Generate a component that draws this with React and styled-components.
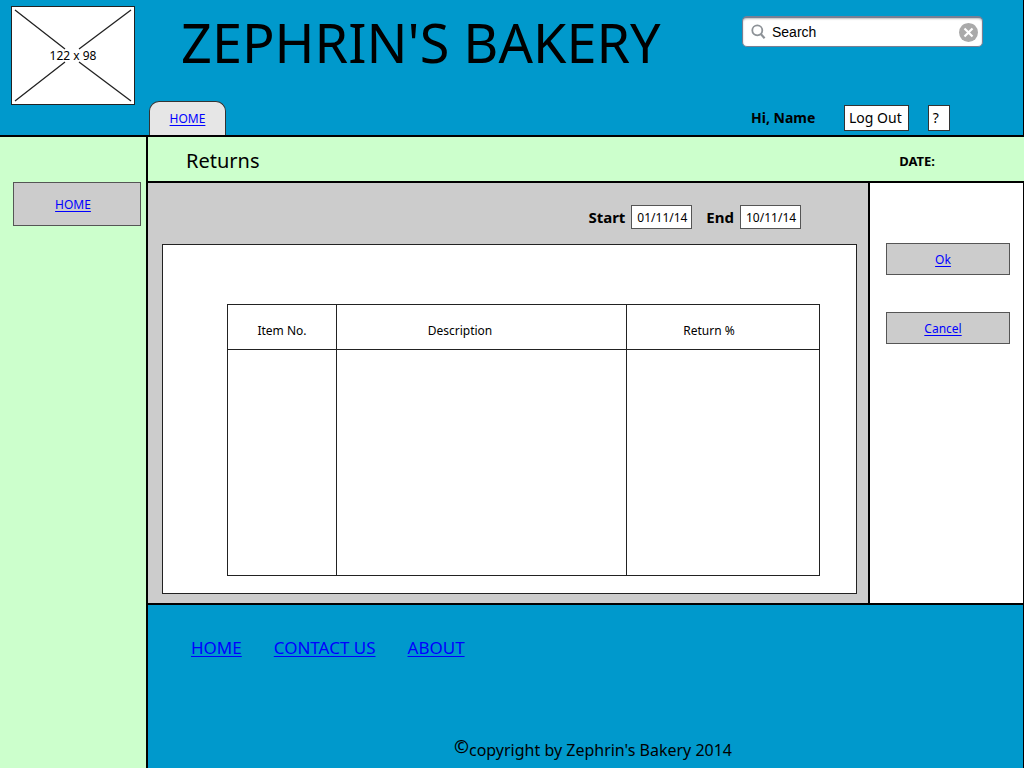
import React from "react";
import styled, { createGlobalStyle } from "styled-components";

const color = {
  blue: "#0099cc",
  green: "#ccffcc",
  grey: "#cccccc",
  line: "#000000",
  soft: "#555555",
  link: "#0000ff",
};

const GlobalStyle = createGlobalStyle`
  *, *::before, *::after { box-sizing: border-box; }
  body {
    margin: 0;
    color: #000;
    font-family: "Noto Sans", sans-serif;
    font-size: 12px;
    line-height: 16px;
  }
  h1, h2, p { margin: 0; font-weight: 400; }
`;

const Page = styled.div`
  display: flex;
  flex-direction: column;
  min-height: 100vh;
`;

const Header = styled.header`
  display: grid;
  grid-template-columns: 149px 1fr auto;
  min-height: 137px;
  background: ${color.blue};
  border-bottom: 2px solid ${color.line};
  border-right: 1px solid ${color.line};
`;

const Logo = styled.div`
  display: grid;
  place-items: center;
  width: 124px;
  height: 99px;
  margin: 6px 0 0 11px;
  background: #fff;
  border: 1px solid #222;

  > * { grid-area: 1 / 1; }
`;

const Brand = styled.div`
  display: flex;
  flex-direction: column;
  justify-content: space-between;
  align-items: flex-start;
`;

const SiteTitle = styled.h1`
  padding: 10px 0 0 32px;
  font-size: 54px;
  line-height: 64px;
  white-space: nowrap;
`;

const Link = styled.a`
  color: ${color.link};
  font-size: ${(p) => (p.$large ? 17 : 12)}px;
  line-height: ${(p) => (p.$large ? 24 : 16)}px;
  text-decoration: underline;
  text-underline-offset: 2px;
`;

const Tab = styled.nav`
  width: 77px;
  height: 34px;
  padding-top: 9px;
  text-align: center;
  background: #e6e6e6;
  border: 1px solid #333;
  border-bottom: 0;
  border-radius: 10px 10px 0 0;
`;

const Tools = styled.div`
  display: flex;
  flex-direction: column;
  justify-content: space-between;
  width: 241px;
  margin-right: 40px;
  padding: 16px 0 4px;
`;

const SearchBox = styled.form`
  display: flex;
  align-items: center;
  height: 31px;
  padding: 0 4px 0 8px;
  background: #fff;
  border: 1px solid #777f94;
  border-top-width: 2px;
  border-radius: 5px;
  box-shadow: inset 0 1px 2px #bbb;
`;

const SearchInput = styled.input`
  flex: 1;
  min-width: 0;
  padding: 0 0 0 6px;
  border: 0;
  outline: 0;
  background: transparent;
  color: #000;
  font: 14px/20px "Liberation Sans", sans-serif;
`;

const ClearButton = styled.button`
  display: flex;
  padding: 0;
  border: 0;
  background: none;
`;

const UserRow = styled.div`
  display: flex;
  align-items: center;
  padding-left: 9px;
`;

const Greeting = styled.p`
  flex: 0 0 93px;
  font-size: 14px;
  font-weight: 700;
`;

const SmallButton = styled.button`
  height: 26px;
  margin-right: 19px;
  padding: 0 ${(p) => (p.$wide ? 6 : 10)}px 0 4px;
  background: #fff;
  border: 1px solid #333;
  color: #000;
  font: 14px/20px "Noto Sans", sans-serif;
`;

const Body = styled.div`
  flex: 1;
  display: grid;
  grid-template-columns: 148px 1fr;
`;

const Sidebar = styled.aside`
  padding: 45px 5px 0 13px;
  background: ${color.green};
  border-right: 2px solid ${color.line};
`;

const BoxLink = styled.a`
  display: flex;
  align-items: center;
  justify-content: center;
  height: ${(p) => (p.$tall ? 44 : 32)}px;
  padding: 2px ${(p) => (p.$tall ? 8 : 10)}px 0 0;
  background: ${color.grey};
  border: 1px solid ${color.soft};
  color: ${color.link};
  text-decoration: underline;
  text-underline-offset: 2px;
`;

const Column = styled.div`
  display: flex;
  flex-direction: column;
  min-width: 0;
`;

const TitleBar = styled.div`
  display: flex;
  align-items: center;
  justify-content: space-between;
  height: 46px;
  padding: 4px 89px 0 38px;
  background: ${color.green};
  border-bottom: 2px solid ${color.line};
`;

const PageTitle = styled.h2`
  font-size: 20px;
  line-height: 28px;
`;

const DateLabel = styled.p`
  font-size: 13px;
  font-weight: 700;
`;

const Workspace = styled.div`
  display: grid;
  grid-template-columns: 1fr 154px;
`;

const Main = styled.main`
  padding: 22px 11px 9px 14px;
  background: ${color.grey};
  border-right: 2px solid ${color.line};
`;

const Filters = styled.form`
  display: flex;
  justify-content: flex-end;
  gap: 14px;
  padding-right: 56px;
`;

const Field = styled.label`
  display: flex;
  align-items: center;
  gap: 6px;
  font-size: 15px;
  font-weight: 700;
`;

const DateInput = styled.input`
  width: 61px;
  height: 24px;
  padding: 0 0 0 5px;
  background: #fff;
  border: 1px solid ${color.soft};
  border-radius: 0;
  color: #000;
  font: 12px/16px "Noto Sans", sans-serif;
`;

const Panel = styled.section`
  min-height: 350px;
  margin-top: 15px;
  padding: 59px 36px 17px 64px;
  background: #fff;
  border: 1px solid #222;
`;

const Table = styled.table`
  width: 100%;
  table-layout: fixed;
  border-collapse: collapse;
`;

const HeadCell = styled.th`
  width: ${(p) => p.$width};
  height: 45px;
  padding: 8px ${(p) => p.$inset}px 0 0;
  border: 1px solid #222;
  font-weight: 400;
  text-align: center;
`;

const Cell = styled.td`
  height: 226px;
  border: 1px solid #222;
`;

const Actions = styled.div`
  display: flex;
  flex-direction: column;
  gap: 37px;
  padding: 60px 13px 0 16px;
  background: #fff;
  border-right: 1px solid ${color.line};
`;

const Footer = styled.footer`
  flex: 1;
  display: flex;
  flex-direction: column;
  justify-content: space-between;
  padding: 31px 0 6px;
  background: ${color.blue};
  border-top: 2px solid ${color.line};
  border-right: 1px solid ${color.line};
`;

const FooterNav = styled.nav`
  display: flex;
  gap: 32px;
  padding-left: 43px;
`;

const Copyright = styled.p`
  padding-left: 15px;
  font-size: 16px;
  line-height: 24px;
  text-align: center;
`;

const Mark = styled.span`
  font-size: 18px;
  font-weight: 600;
  line-height: 16px;
  vertical-align: 3px;
`;

const columns = [
  { label: "Item No.", width: "18.4%", inset: 0 },
  { label: "Description", width: "49%", inset: 43 },
  { label: "Return %", width: "32.6%", inset: 28 },
];

export default function App() {
  return (
    <>
      <GlobalStyle />
      <Page>
        <Header>
          <Logo>
            <svg width="122" height="97" viewBox="0 0 122 97" stroke="#222" aria-hidden="true">
              <path d="M3 3L53 42M119 3L67 42M3 94L53 55M119 94L67 55" fill="none" strokeWidth="1.3" />
            </svg>
            <span>122 x 98</span>
          </Logo>
          <Brand>
            <SiteTitle>ZEPHRIN'S BAKERY</SiteTitle>
            <Tab>
              <Link href="#home">HOME</Link>
            </Tab>
          </Brand>
          <Tools>
            <SearchBox role="search">
              <svg width="15" height="16" viewBox="0 0 15 16" fill="none" stroke="#8d9297" strokeWidth="1.8" aria-hidden="true">
                <circle cx="6.3" cy="6.3" r="5" />
                <path d="M9.8 10L13.6 14.2" strokeWidth="2.2" />
              </svg>
              <SearchInput type="text" aria-label="Search" defaultValue="Search" />
              <ClearButton type="reset" aria-label="Clear search">
                <svg width="19" height="19" viewBox="0 0 19 19">
                  <circle cx="9.5" cy="9.5" r="9.5" fill="#aaaaaa" />
                  <path d="M5.5 5.5L13.5 13.5M13.5 5.5L5.5 13.5" stroke="#fff" strokeWidth="2.2" />
                </svg>
              </ClearButton>
            </SearchBox>
            <UserRow>
              <Greeting>Hi, Name</Greeting>
              <SmallButton type="button" $wide>Log Out</SmallButton>
              <SmallButton type="button">?</SmallButton>
            </UserRow>
          </Tools>
        </Header>
        <Body>
          <Sidebar>
            <BoxLink href="#home" $tall>HOME</BoxLink>
          </Sidebar>
          <Column>
            <TitleBar>
              <PageTitle>Returns</PageTitle>
              <DateLabel>DATE:</DateLabel>
            </TitleBar>
            <Workspace>
              <Main>
                <Filters>
                  <Field>
                    Start
                    <DateInput type="text" defaultValue="01/11/14" />
                  </Field>
                  <Field>
                    End
                    <DateInput type="text" defaultValue="10/11/14" />
                  </Field>
                </Filters>
                <Panel>
                  <Table>
                    <thead>
                      <tr>
                        {columns.map((c) => (
                          <HeadCell key={c.label} $width={c.width} $inset={c.inset}>
                            {c.label}
                          </HeadCell>
                        ))}
                      </tr>
                    </thead>
                    <tbody>
                      <tr>
                        {columns.map((c) => (
                          <Cell key={c.label} />
                        ))}
                      </tr>
                    </tbody>
                  </Table>
                </Panel>
              </Main>
              <Actions>
                <BoxLink href="#ok">Ok</BoxLink>
                <BoxLink href="#cancel">Cancel</BoxLink>
              </Actions>
            </Workspace>
            <Footer>
              <FooterNav>
                <Link $large href="#home">HOME</Link>
                <Link $large href="#contact">CONTACT US</Link>
                <Link $large href="#about">ABOUT</Link>
              </FooterNav>
              <Copyright>
                <Mark>©</Mark>copyright by Zephrin's Bakery 2014
              </Copyright>
            </Footer>
          </Column>
        </Body>
      </Page>
    </>
  );
}
